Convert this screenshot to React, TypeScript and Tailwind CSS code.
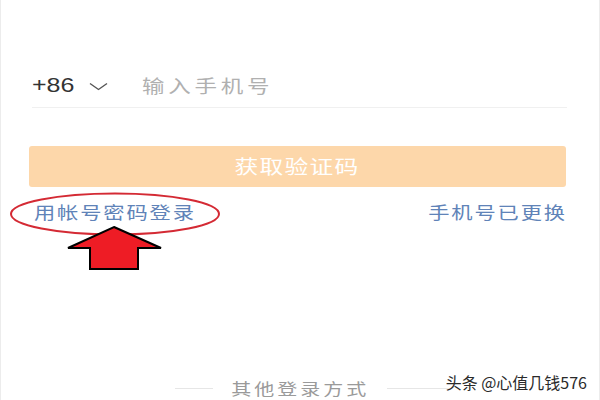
export default function App() {
  const cjk = { fontFamily: '"Noto Sans CJK SC", "Noto Sans", sans-serif' };

  return (
    <div
      className="relative w-[600px] h-[400px] overflow-hidden bg-white border-l border-r border-[#ececec]"
      style={cjk}
    >
      <div className="pl-[28px] pr-[33px] pt-[70px]">
        {/* phone row */}
        <div className="flex items-center h-[30px] pl-[3px]">
          <span
            className="text-[20px] text-[#333] scale-x-[1.25] origin-left w-[45px]"
            style={{ fontFamily: '"Liberation Sans", sans-serif' }}
          >
            +86
          </span>
          <svg
            className="ml-[12px] mt-[2px]"
            width="19"
            height="9"
            viewBox="0 0 19 9"
            fill="none"
          >
            <path d="M1 1.5 L9.5 7.5 L18 1.5" stroke="#555" strokeWidth="1.4" />
          </svg>
          <span className="ml-[34px] inline-block text-[18px] tracking-[3px] text-[#b0b0b0] scale-x-[1.25] origin-left">
            输入手机号
          </span>
        </div>
        <div className="ml-[3px] mr-[-1px] mt-[7px] h-px bg-[#f0f0f0]" />

        {/* button */}
        <div className="mt-[38px] h-[41px] rounded-[3px] bg-[#fdd7aa] flex items-center justify-center">
          <span className="inline-block text-[19px] tracking-[1px] text-white scale-x-[1.25]">
            获取验证码
          </span>
        </div>

        {/* links */}
        <div className="mt-[13px] flex items-center justify-between h-[24px] pl-[5px]">
          <span className="inline-block text-[17px] tracking-[1.5px] text-[#6083b8] scale-x-[1.25] origin-left">
            用帐号密码登录
          </span>
          <span className="inline-block text-[17px] tracking-[1.5px] mr-[-1px] text-[#6083b8] scale-x-[1.25] origin-right">
            手机号已更换
          </span>
        </div>

        {/* other login */}
        <div className="mt-[152px] flex items-center ml-[146px]">
          <div className="w-[38px] h-px bg-[#e6e6e6]" />
          <div className="ml-[18px] w-[138px] flex justify-center">
            <span className="inline-block text-[16px] tracking-[2.4px] text-[#9a9a9a] scale-x-[1.25]">
              其他登录方式
            </span>
          </div>
          <div className="ml-[18px] w-[62px] h-px bg-[#e6e6e6]" />
        </div>
      </div>

      {/* annotation: ellipse + arrow */}
      <svg
        className="absolute left-0 top-0"
        width="600"
        height="400"
        viewBox="0 0 600 400"
        fill="none"
      >
        <ellipse cx="114" cy="214" rx="104" ry="20.5" stroke="#d42a34" strokeWidth="2" />
        <polygon
          points="113,227 160,248 137,248 137,269 89,269 89,248 67,248"
          fill="#ee1c25"
          stroke="#000"
          strokeWidth="2"
          strokeLinejoin="miter"
        />
      </svg>

      {/* watermark */}
      <span
        className="absolute right-[12px] top-[370px] text-[16px] text-[#2a2a2a]"
        style={{ textShadow: "0 0 2px #fff, 0 0 2px #fff" }}
      >
        头条 @心值几钱576
      </span>
    </div>
  );
}
